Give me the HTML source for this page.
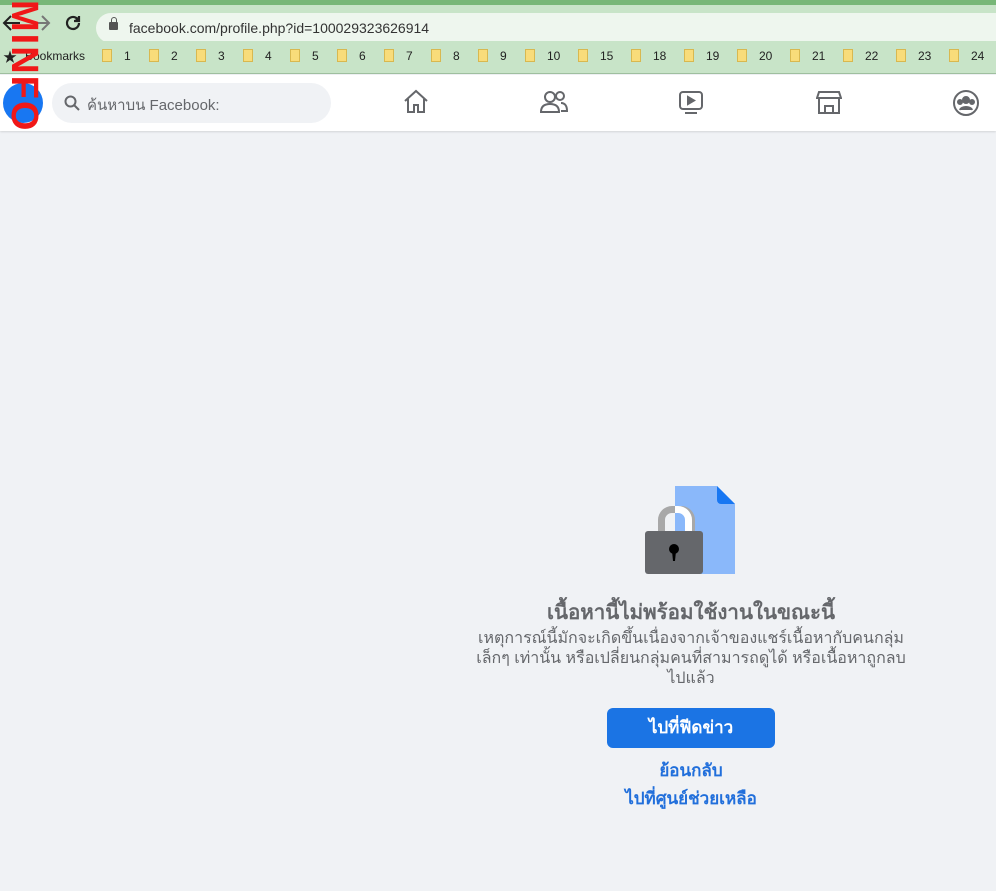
<!DOCTYPE html>
<html><head><meta charset="utf-8"><style>
*{margin:0;padding:0;box-sizing:border-box}
body{width:996px;height:891px;overflow:hidden;background:#f0f2f5;font-family:"Liberation Sans","Noto Sans CJK SC",sans-serif;position:relative}
.top{position:absolute;left:0;top:0;width:996px;height:8px;background:#77b777}
.tool{position:absolute;left:0;top:5px;width:996px;height:36px;background:#c8e4c8}
.url{position:absolute;left:96px;top:8px;width:920px;height:30px;border-radius:15px;background:#eef6ee;font-size:14px;color:#333;padding:7px 0 0 33px}
.bm{position:absolute;left:0;top:41px;width:996px;height:33px;background:#c8e4c8;border-bottom:1px solid #9fbf9f;font-size:12px;color:#222}
.bm span{position:absolute;top:8px}
.fold{display:inline-block;width:10px;height:13px;background:#f8dc7a;border:1px solid #d8b850;margin-right:12px;vertical-align:-2px}
.hdr{position:absolute;left:0;top:75px;width:996px;height:56px;background:#fff;box-shadow:0 1px 2px rgba(0,0,0,.12)}
.search{position:absolute;left:52px;top:8px;width:279px;height:40px;border-radius:20px;background:#f0f2f5;font-size:15px;color:#65676b;padding:10px 0 0 35px}
.ic{position:absolute;top:14px}
.t{position:absolute;text-align:center;width:500px;left:441px}
</style></head><body>
<div class="top"></div>
<div class="tool">
<svg style="position:absolute;left:2px;top:9px" width="20" height="18" viewBox="0 0 20 18" fill="none" stroke="#222" stroke-width="2"><path d="M18 9H3M9 2L2 9l7 7"/></svg>
<svg style="position:absolute;left:31px;top:9px" width="20" height="18" viewBox="0 0 20 18" fill="none" stroke="#777" stroke-width="2"><path d="M2 9h15M11 2l7 7-7 7"/></svg>
<svg style="position:absolute;left:64px;top:9px" width="18" height="18" viewBox="0 0 18 18" fill="none" stroke="#222" stroke-width="2.2"><path d="M15 9a6 6 0 1 1-2-4.5"/><path d="M15 2v5h-5" fill="#222"/></svg>
<div class="url"><span style="position:absolute;left:13px;top:9px;width:9px;height:8px;background:#555;border-radius:1px"></span><span style="position:absolute;left:14.5px;top:4px;width:6px;height:7px;border:1.5px solid #555;border-radius:3px 3px 0 0"></span>facebook.com/profile.php?id=100029323626914</div>
</div>
<div class="bm">
<span style="left:3px;top:6px;font-size:14px">★</span><span style="left:25px">Bookmarks</span>
<span style="left:102px"><i class="fold"></i>1</span><span style="left:149px"><i class="fold"></i>2</span><span style="left:196px"><i class="fold"></i>3</span><span style="left:243px"><i class="fold"></i>4</span><span style="left:290px"><i class="fold"></i>5</span><span style="left:337px"><i class="fold"></i>6</span><span style="left:384px"><i class="fold"></i>7</span><span style="left:431px"><i class="fold"></i>8</span><span style="left:478px"><i class="fold"></i>9</span><span style="left:525px"><i class="fold"></i>10</span><span style="left:578px"><i class="fold"></i>15</span><span style="left:631px"><i class="fold"></i>18</span><span style="left:684px"><i class="fold"></i>19</span><span style="left:737px"><i class="fold"></i>20</span><span style="left:790px"><i class="fold"></i>21</span><span style="left:843px"><i class="fold"></i>22</span><span style="left:896px"><i class="fold"></i>23</span><span style="left:949px"><i class="fold"></i>24</span>
</div>
<div class="hdr">
<div style="position:absolute;left:3px;top:8px;width:40px;height:40px;border-radius:50%;background:#1877f2"></div>
<div class="search"><svg style="position:absolute;left:12px;top:12px" width="16" height="16" viewBox="0 0 16 16"><circle cx="6.5" cy="6.5" r="5" fill="none" stroke="#65676b" stroke-width="2"/><path d="M10 10l5 5" stroke="#65676b" stroke-width="2"/></svg>ค้นหาบน Facebook:</div>
<svg class="ic" style="left:403px" width="26" height="26" viewBox="0 0 26 26" fill="none" stroke="#65676b" stroke-width="2"><path d="M2 12L13 2l11 10M5 10v13h6v-7h4v7h6V10"/></svg>
<svg class="ic" style="left:540px" width="28" height="26" viewBox="0 0 28 26" fill="none" stroke="#65676b" stroke-width="2"><circle cx="10" cy="8" r="5"/><path d="M1 23c0-6 4-8 9-8s9 2 9 8z"/><circle cx="20" cy="7" r="4"/><path d="M21 14c4 0 6 3 6 8h-6"/></svg>
<svg class="ic" style="left:678px" width="26" height="26" viewBox="0 0 26 26" fill="none" stroke="#65676b" stroke-width="2"><rect x="2" y="3" width="22" height="17" rx="3"/><path d="M10 8v7l6-3.5z" fill="#65676b"/><path d="M7 24h12"/></svg>
<svg class="ic" style="left:816px" width="26" height="26" viewBox="0 0 26 26" fill="none" stroke="#65676b" stroke-width="2"><path d="M3 3h20l2 6H1zM3 9v15h20V9M9 24v-7h8v7"/></svg>
<svg class="ic" style="left:952px" width="28" height="28" viewBox="0 0 28 28" fill="none" stroke="#65676b" stroke-width="2"><circle cx="14" cy="14" r="12"/><circle cx="14" cy="11" r="3" fill="#65676b"/><circle cx="8" cy="13" r="2" fill="#65676b"/><circle cx="20" cy="13" r="2" fill="#65676b"/><path d="M8 21c1-4 11-4 12 0" fill="#65676b"/></svg>
</div>
<div style="position:absolute;transform:rotate(90deg);transform-origin:left top;left:44px;top:0;font-size:38px;font-weight:bold;color:#f01818;letter-spacing:2px;line-height:40px">MINFO</div>
<svg style="position:absolute;left:644px;top:485px" width="92" height="90" viewBox="0 0 92 90">
<path d="M31 1h42l18 18v70H31z" fill="#8ab8fa"/><path d="M73 1l18 18H77a4 4 0 0 1-4-4z" fill="#1877f2"/>
<path d="M14 47V35a14 14 0 0 1 14-14h10a14 14 0 0 1 13 14v12h-7V35a7 7 0 0 0-7-7h-9a7 7 0 0 0-7 7v12z" fill="#a8a8a8"/>
<path d="M31 21h3a14 14 0 0 1 14 14v12h-7V35a7 7 0 0 0-7-7h-3z" fill="#fff"/>
<rect x="1" y="46" width="58" height="43" rx="3" fill="#65676b"/>
<circle cx="30" cy="64" r="5" fill="#000"/><path d="M28 66h4l-1 10h-2z" fill="#000"/>
</svg>
<div class="t" style="top:596px;font-size:20.5px;font-weight:bold;color:#65676b">เนื้อหานี้ไม่พร้อมใช้งานในขณะนี้</div>
<div class="t" style="top:629px;font-size:16px;color:#65676b;line-height:20px;width:440px;left:471px">เหตุการณ์นี้มักจะเกิดขึ้นเนื่องจากเจ้าของแชร์เนื้อหากับคนกลุ่ม เล็กๆ เท่านั้น หรือเปลี่ยนกลุ่มคนที่สามารถดูได้ หรือเนื้อหาถูกลบไปแล้ว</div>
<div style="position:absolute;left:607px;top:708px;width:168px;height:40px;border-radius:6px;background:#1b74e4;color:#fff;font-weight:bold;font-size:17px;text-align:center;line-height:40px">ไปที่ฟีดข่าว</div>
<div class="t" style="top:757px;font-size:17px;font-weight:bold;color:#216fdb">ย้อนกลับ</div>
<div class="t" style="top:785px;font-size:17px;font-weight:bold;color:#216fdb">ไปที่ศูนย์ช่วยเหลือ</div>
</body></html>
